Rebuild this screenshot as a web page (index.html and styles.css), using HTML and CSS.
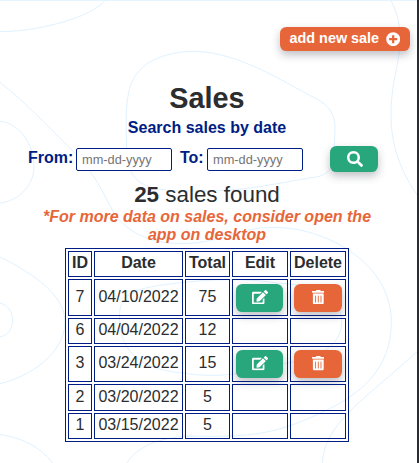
FILE: index.html
```html
<!DOCTYPE html>
<html lang="en">
<head>
<meta charset="utf-8">
<title>Sales</title>
<link rel="stylesheet" href="styles.css">
</head>
<body>
<svg class="backdrop" viewBox="0 0 1257 1389" aria-hidden="true">
  <path d="M0 1H1251"/>
  <path d="M0 95C120 95 285 48 315 0"/>
  <path d="M0 247C80 310 150 385 215 450S300 560 345 645C390 700 450 731 550 731C660 731 710 682 820 682C980 682 1174 790 1174 965C1174 1110 1080 1185 960 1240C800 1315 720 1310 550 1308"/>
  <path d="M0 364C55 368 102 430 102 500C102 560 50 605 0 609"/>
  <path d="M380 450C378 340 372 260 420 210C460 165 540 153 590 154C720 160 840 240 950 297C1020 335 1003 380 1003 450C1003 510 980 528 935 533C830 550 740 572 620 573C480 573 380 580 380 450Z"/>
  <path d="M1172 0C1220 90 1195 170 1182 245C1160 370 1175 480 1257 593"/>
  <path d="M0 771C110 825 195 890 195 965C195 1060 90 1130 0 1151"/>
  <path d="M0 909C22 914 38 936 38 960C38 989 20 1009 0 1010"/>
  <path d="M360 970C350 890 390 870 480 856C590 840 710 830 840 850C970 855 1025 900 1025 965C1025 1060 910 1080 840 1093C710 1125 650 1135 540 1118C430 1108 365 1060 360 970Z"/>
  <path d="M0 1303C70 1315 120 1340 158 1389M380 1389C420 1328 500 1310 580 1308M967 1389C975 1270 1080 1210 1257 1050"/>
</svg>
<div class="page">
  <header class="toolbar">
    <button class="btn btn-add">add new sale
      <svg class="icon-plus" viewBox="0 0 512 512"><path fill="currentColor" fill-rule="evenodd" d="M256 8a248 248 0 1 0 0 496 248 248 0 0 0 0-496zM400 284c0 7-5 12-12 12h-92v92c0 7-5 12-12 12h-56c-7 0-12-5-12-12v-92h-92c-7 0-12-5-12-12v-56c0-7 5-12 12-12h92v-92c0-7 5-12 12-12h56c7 0 12 5 12 12v92h92c7 0 12 5 12 12z"/></svg>
    </button>
  </header>
  <h1 class="title">Sales</h1>
  <h2 class="subtitle">Search sales by date</h2>
  <form class="search">
    <label class="label" for="from">From:</label>
    <input class="date" id="from" placeholder="mm-dd-yyyy">
    <label class="label label-to" for="to">To:</label>
    <input class="date" id="to" placeholder="mm-dd-yyyy">
    <button class="btn btn-search" type="button" aria-label="Search">
      <svg class="icon" viewBox="0 0 512 512"><path fill="currentColor" d="M505 442.700 405.300 343c-4.500-4.500-10.600-7-17-7H372c27.600-35.300 44-79.700 44-128C416 93.100 322.900 0 208 0S0 93.100 0 208s93.100 208 208 208c48.300 0 92.700-16.400 128-44v16.300c0 6.400 2.500 12.500 7 17l99.700 99.700c9.400 9.400 24.600 9.400 33.900 0l28.300-28.300c9.400-9.400 9.400-24.600.1-34zM208 336a128 128 0 1 1 0-256 128 128 0 0 1 0 256z"/></svg>
    </button>
  </form>
  <p class="count"><b>25</b> sales found</p>
  <p class="note">*For more data on sales, consider open the app on desktop</p>
  <svg class="symbols" aria-hidden="true">
    <symbol id="edit" viewBox="0 0 576 512"><path fill="currentColor" d="M402.600 83.200l90.200 90.200c3.800 3.800 3.800 10 0 13.800L274.400 405.600l-92.800 10.300c-12.400 1.400-22.900-9.100-21.500-21.500l10.300-92.800L388.800 83.200c3.800-3.800 10-3.800 13.800 0zm162-22.900l-48.800-48.800c-15.200-15.200-39.900-15.200-55.200 0l-35.400 35.400c-3.800 3.800-3.800 10 0 13.800l90.200 90.200c3.800 3.800 10 3.800 13.800 0l35.400-35.400c15.200-15.300 15.200-40 0-55.200zM384 346.200V448H64V128h229.800c3.200 0 6.200-1.300 8.500-3.500l40-40c7.600-7.600 2.200-20.500-8.500-20.500H48C21.500 64 0 85.500 0 112v352c0 26.500 21.500 48 48 48h352c26.500 0 48-21.500 48-48V306.200c0-10.700-12.900-16-20.500-8.500l-40 40c-2.200 2.300-3.500 5.300-3.500 8.500z"/></symbol>
    <symbol id="trash" viewBox="0 0 448 512"><path fill="currentColor" fill-rule="evenodd" d="M32 464a48 48 0 0 0 48 48h288a48 48 0 0 0 48-48V128H32zm272-256a16 16 0 0 1 32 0v224a16 16 0 0 1-32 0zm-96 0a16 16 0 0 1 32 0v224a16 16 0 0 1-32 0zm-96 0a16 16 0 0 1 32 0v224a16 16 0 0 1-32 0zM432 32H312l-9.400-18.700A24 24 0 0 0 281.100 0H166.800a23.700 23.700 0 0 0-21.400 13.300L136 32H16A16 16 0 0 0 0 48v32a16 16 0 0 0 16 16h416a16 16 0 0 0 16-16V48a16 16 0 0 0-16-16z"/></symbol>
  </svg>
  <table class="sales">
    <colgroup><col class="c-id"><col class="c-date"><col class="c-total"><col class="c-act"><col class="c-act"></colgroup>
    <tr class="row"><th>ID</th><th>Date</th><th>Total</th><th>Edit</th><th>Delete</th></tr>
    <tr class="row-first"><td>7</td><td>04/10/2022</td><td>75</td>
      <td><button class="btn btn-edit" aria-label="Edit"><svg class="icon-edit"><use href="#edit"/></svg></button></td>
      <td><button class="btn btn-delete" aria-label="Delete"><svg class="icon-trash"><use href="#trash"/></svg></button></td></tr>
    <tr class="row"><td>6</td><td>04/04/2022</td><td>12</td><td></td><td></td></tr>
    <tr class="row-actions"><td>3</td><td>03/24/2022</td><td>15</td>
      <td><button class="btn btn-edit" aria-label="Edit"><svg class="icon-edit"><use href="#edit"/></svg></button></td>
      <td><button class="btn btn-delete" aria-label="Delete"><svg class="icon-trash"><use href="#trash"/></svg></button></td></tr>
    <tr class="row-tall"><td>2</td><td>03/20/2022</td><td>5</td><td></td><td></td></tr>
    <tr class="row"><td>1</td><td>03/15/2022</td><td>5</td><td></td><td></td></tr>
  </table>
</div>
</body>
</html>
```
FILE: styles.css
```css
* { box-sizing: border-box; }
body {
  margin: 0;
  height: 463px;
  overflow: hidden;
  background: #fff;
  border-right: 2px solid #2b2b33;
  color: #2b2d2f;
  font: 16px/18px "Liberation Sans", Arial, sans-serif;
}
.backdrop {
  position: absolute;
  left: 0;
  top: 0;
  width: 419px;
  height: 463px;
  z-index: -1;
  clip-path: inset(0 2px 0 0);
  fill: none;
  stroke: #e0f2ff;
  stroke-width: 3;
}
.page { width: 414px; }
.symbols { display: none; }
.toolbar { display: flex; justify-content: flex-end; padding: 27px 4px 0 0; }
.btn {
  display: flex;
  align-items: center;
  justify-content: center;
  padding: 0;
  border: 0;
  border-radius: 6.4px;
  color: #fff;
  font-family: inherit;
  box-shadow: 0 4px 9px rgba(43, 45, 66, .3);
}
.btn-add {
  width: 130px;
  height: 24px;
  gap: 7px;
  padding-bottom: 2px;
  background: #e76639;
  font-size: 14.4px;
  font-weight: bold;
}
.icon-plus { width: 14.4px; height: 14.4px; margin-top: 2px; }
.title { margin: 30px 0 0; font-size: 28.8px; line-height: 34px; text-align: center; }
.subtitle { margin: 4px 0 0; font-size: 16px; line-height: 18px; color: #001d85; text-align: center; }
.search { display: flex; margin: 9px 0 0 28px; height: 26px; }
.label { width: 48px; padding-top: 3px; font-weight: bold; color: #001d85; }
.label-to { width: 27px; margin-left: 8px; }
.date {
  width: 96px;
  height: 23px;
  margin-top: 2px;
  padding: 1px 5px;
  border: 1px solid #001d85;
  border-radius: 2px;
  background: #fff;
  font: 12.8px "Liberation Sans", Arial, sans-serif;
}
.date::placeholder { color: #757575; }
.btn-search { width: 48px; height: 26px; margin-left: 27px; padding-left: 2px; background: #27a77b; }
.icon { width: 16px; height: 16px; }
.count { margin: 10px 0 0; font-size: 22.4px; line-height: 26px; text-align: center; }
.note { margin: 0 40px; color: #e76639; font-weight: bold; font-style: italic; text-align: center; }
.sales {
  width: 284px;
  margin: 4px auto 0;
  table-layout: fixed;
  border: 1px solid #001d85;
  border-spacing: 2px;
  text-align: center;
}
.c-id { width: 24px; }
.c-date { width: 89px; }
.c-total { width: 45px; }
.c-act { width: 56px; }
.sales th, .sales td { padding: 0 0 2px; border: 1px solid #001d85; white-space: nowrap; }
.row { height: 26px; }
.row-first { height: 37px; }
.row-actions { height: 36px; }
.row-tall { height: 27px; }
.btn-edit, .btn-delete { height: 28px; margin: 2px auto 0; padding-bottom: 1px; }
.btn-edit { width: 47px; margin-left: 3px; background: #27a77b; }
.btn-delete { width: 48px; background: #e76639; }
.icon-edit { width: 16px; height: 14.4px; }
.icon-trash { width: 12.6px; height: 14.4px; }
```
